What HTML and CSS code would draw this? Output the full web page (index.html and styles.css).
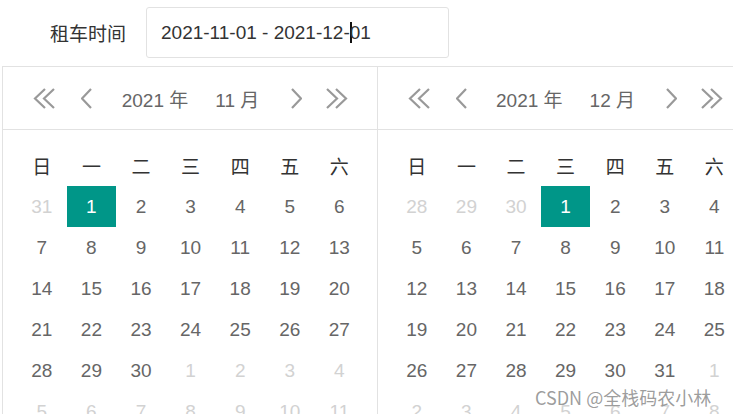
FILE: index.html
```html
<!DOCTYPE html>
<html lang="zh-CN">
<head>
  <meta charset="UTF-8">
  <title>租车时间</title>
  <link rel="stylesheet" href="styles.css">
</head>
<body>

  <!-- 表单行 -->
  <div class="form-item">
    <label class="form-label">租车时间</label>
    <div class="form-input">2021-11-01 - 2021-12-<span class="caret"></span>01</div>
  </div>

  <!-- 日期范围面板 -->
  <div class="laydate" id="laydate">
    <div class="laydate-main" data-year="2021" data-month="11"></div>
    <div class="laydate-main" data-year="2021" data-month="12"></div>
  </div>

  <div class="watermark">CSDN @全栈码农小林</div>

  <script>
    const prev2 = '<svg width="22" height="21" viewBox="0 0 22 21"><polyline points="12,1 2,10.5 12,20"/><polyline points="21,1 11,10.5 21,20"/></svg>';
    const prev1 = '<svg width="11" height="21" viewBox="0 0 11 21"><polyline points="10,1 1,10.5 10,20"/></svg>';
    const next1 = '<svg width="11" height="21" viewBox="0 0 11 21"><polyline points="1,1 10,10.5 1,20"/></svg>';
    const next2 = '<svg width="22" height="21" viewBox="0 0 22 21"><polyline points="1,1 11,10.5 1,20"/><polyline points="10,1 20,10.5 10,20"/></svg>';
    const weeks = ['日', '一', '二', '三', '四', '五', '六'];

    document.querySelectorAll('.laydate-main').forEach(main => {
      const year = +main.dataset.year;
      const month = +main.dataset.month;

      let html = '<div class="laydate-header">' +
        '<span class="arrow prev2">' + prev2 + '</span>' +
        '<span class="arrow prev1">' + prev1 + '</span>' +
        '<div class="laydate-title"><span>' + year + ' 年</span><span>' + month + ' 月</span></div>' +
        '<span class="arrow next1">' + next1 + '</span>' +
        '<span class="arrow next2">' + next2 + '</span>' +
        '</div><div class="laydate-content">';

      weeks.forEach(w => { html += '<div class="week">' + w + '</div>'; });

      // 第一格从上月的日子开始
      const first = new Date(year, month - 1, 1);
      const start = new Date(year, month - 1, 1 - first.getDay());
      for (let i = 0; i < 42; i++) {
        const d = new Date(start.getFullYear(), start.getMonth(), start.getDate() + i);
        let cls = 'day';
        if (d.getMonth() !== month - 1) cls += ' other';
        else if (d.getDate() === 1) cls += ' this';
        html += '<div class="' + cls + '">' + d.getDate() + '</div>';
      }
      html += '</div>';
      main.innerHTML = html;
    });
  </script>
</body>
</html>
```

FILE: styles.css
```css
body {
  margin: 0;
  padding: 0;
  height: 414px;
  overflow: hidden;
  background: #fff;
  font-family: "Liberation Sans", Arial, "Noto Sans CJK SC", sans-serif;
  position: relative;
}

.form-item {
  display: flex;
  align-items: center;
  padding-top: 7px;
}

.form-label {
  width: 126px;
  text-align: right;
  font-family: "Noto Sans CJK SC", sans-serif;
  font-size: 19px;
  color: #333;
}

.form-input {
  box-sizing: border-box;
  margin-left: 20px;
  width: 303px;
  height: 51px;
  line-height: 49px;
  padding-left: 14px;
  border: 1px solid #e2e2e2;
  border-radius: 3px;
  font-size: 19px;
  color: #333;
}

.caret {
  display: inline-block;
  width: 2px;
  height: 21px;
  background: #111;
  vertical-align: -4px;
  margin-right: -2px;
}

/* 日期面板 */
.laydate {
  display: flex;
  margin: 8px 0 0 2px;
  border: 1px solid #e2e2e2;
  width: 760px;
}

.laydate-main {
  flex: none;
  width: 374px;
  border-right: 1px solid #e2e2e2;
}

.laydate-header {
  display: flex;
  align-items: center;
  height: 62px;
  padding: 0 29px 0 30px;
  border-bottom: 1px solid #e2e2e2;
  color: #666;
  font-size: 19px;
}

.arrow { display: flex; }
.arrow svg {
  fill: none;
  stroke: #999;
  stroke-width: 2.2;
}
.prev1 { margin-left: 26px; }
.next2 { margin-left: 24px; }

.laydate-title {
  flex: 1;
  display: flex;
  justify-content: center;
  gap: 27px;
  padding-right: 2px;
}

.laydate-content {
  display: grid;
  grid-template-columns: repeat(7, 49.6px);
  grid-auto-rows: 41px;
  padding: 15px 0 0 14px;
}

.week {
  display: flex;
  align-items: center;
  justify-content: center;
  height: 40px;
  font-family: "Noto Sans CJK SC", sans-serif;
  font-size: 19px;
  color: #333;
}

.day {
  display: flex;
  align-items: center;
  justify-content: center;
  font-size: 19px;
  color: #666;
}

.day.other { color: #d2d2d2; }

.day.this {
  background: #009688;
  color: #fff;
}

.watermark {
  position: absolute;
  left: 535px;
  top: 384px;
  font-family: "Noto Sans CJK SC", sans-serif;
  font-size: 18px;
  color: rgba(140, 140, 140, 0.85);
  text-shadow: 0 0 2px #fff;
}
```
